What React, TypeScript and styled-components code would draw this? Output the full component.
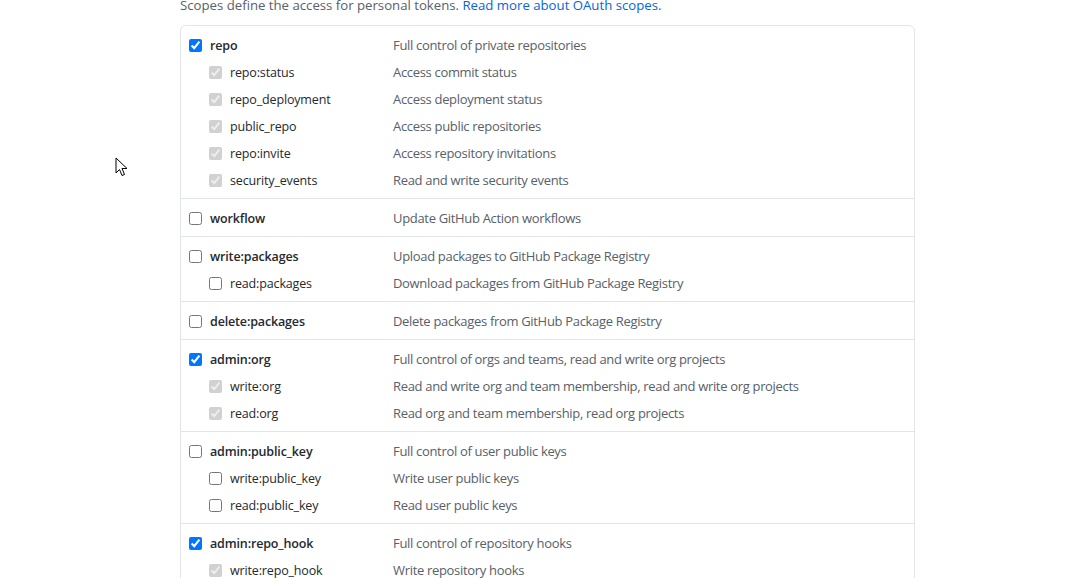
import React from "react";
import styled, { createGlobalStyle } from "styled-components";

const Global = createGlobalStyle`
  html, body { margin: 0; padding: 0; background: #fff; overflow: hidden; }
  body {
    font-family: "Open Sans", "Noto Sans", "Liberation Sans", sans-serif;
    font-size: 13px;
    color: #24292e;
  }
`;

const Page = styled.div`
  position: relative;
  width: 1079px;
  height: 578px;
  overflow: hidden;
`;

const Content = styled.div`
  width: 735px;
  margin: -5px 0 0 180px;
`;

const Note = styled.p`
  margin: 0 0 10px;
  line-height: 20px;
  font-size: 13.2px;
  color: #586069;
  a { color: #0366d6; text-decoration: none; }
`;

const Box = styled.div`
  border: 1px solid #e1e4e8;
  border-radius: 6px;
`;

const Group = styled.div`
  padding: 5px 8px 5px;
  & + & { border-top: 1px solid #e1e4e8; }
`;

const Row = styled.label<{ $sub?: boolean }>`
  display: grid;
  grid-template-columns: 204px 1fr;
  align-items: center;
  height: 27px;
  padding-top: 1px;
  box-sizing: border-box;
  .name {
    display: flex;
    align-items: center;
    padding-left: ${(p) => (p.$sub ? "20px" : "0")};
    font-size: 12.5px;
    letter-spacing: -0.15px;
    font-weight: ${(p) => (p.$sub ? 400 : 600)};
    color: #24292e;
  }
  input {
    width: 13px;
    height: 13px;
    margin: 0 8px 0 0;
  }
  .desc { color: #586069; font-size: 13px; letter-spacing: -0.32px; }
`;

const Cursor = styled.svg`
  position: absolute;
  left: 115px;
  top: 157px;
`;

type Scope = { name: string; desc: string; sub?: boolean; checked?: boolean; disabled?: boolean };

const groups: Scope[][] = [
  [
    { name: "repo", desc: "Full control of private repositories", checked: true },
    { name: "repo:status", desc: "Access commit status", sub: true, checked: true, disabled: true },
    { name: "repo_deployment", desc: "Access deployment status", sub: true, checked: true, disabled: true },
    { name: "public_repo", desc: "Access public repositories", sub: true, checked: true, disabled: true },
    { name: "repo:invite", desc: "Access repository invitations", sub: true, checked: true, disabled: true },
    { name: "security_events", desc: "Read and write security events", sub: true, checked: true, disabled: true },
  ],
  [{ name: "workflow", desc: "Update GitHub Action workflows" }],
  [
    { name: "write:packages", desc: "Upload packages to GitHub Package Registry" },
    { name: "read:packages", desc: "Download packages from GitHub Package Registry", sub: true },
  ],
  [{ name: "delete:packages", desc: "Delete packages from GitHub Package Registry" }],
  [
    { name: "admin:org", desc: "Full control of orgs and teams, read and write org projects", checked: true },
    { name: "write:org", desc: "Read and write org and team membership, read and write org projects", sub: true, checked: true, disabled: true },
    { name: "read:org", desc: "Read org and team membership, read org projects", sub: true, checked: true, disabled: true },
  ],
  [
    { name: "admin:public_key", desc: "Full control of user public keys" },
    { name: "write:public_key", desc: "Write user public keys", sub: true },
    { name: "read:public_key", desc: "Read user public keys", sub: true },
  ],
  [
    { name: "admin:repo_hook", desc: "Full control of repository hooks", checked: true },
    { name: "write:repo_hook", desc: "Write repository hooks", sub: true, checked: true, disabled: true },
    { name: "read:repo_hook", desc: "Read repository hooks", sub: true, checked: true, disabled: true },
  ],
];

export default function App() {
  return (
    <Page>
      <Global />
      <Content>
        <Note>
          Scopes define the access for personal tokens. <a href="#">Read more about OAuth scopes.</a>
        </Note>
        <Box>
          {groups.map((g, i) => (
            <Group key={i}>
              {g.map((s) => (
                <Row key={s.name} $sub={s.sub}>
                  <span className="name">
                    <input type="checkbox" defaultChecked={s.checked} disabled={s.disabled} />
                    {s.name}
                  </span>
                  <span className="desc">{s.desc}</span>
                </Row>
              ))}
            </Group>
          ))}
        </Box>
      </Content>
      <Cursor width="13" height="20" viewBox="0 0 13 20">
        <path d="M1 1 L1 16 L4.5 12.5 L7 18.5 L9.5 17.5 L7 11.5 L12 11.5 Z" fill="#fff" stroke="#000" strokeWidth="1" strokeLinejoin="miter" />
      </Cursor>
    </Page>
  );
}
